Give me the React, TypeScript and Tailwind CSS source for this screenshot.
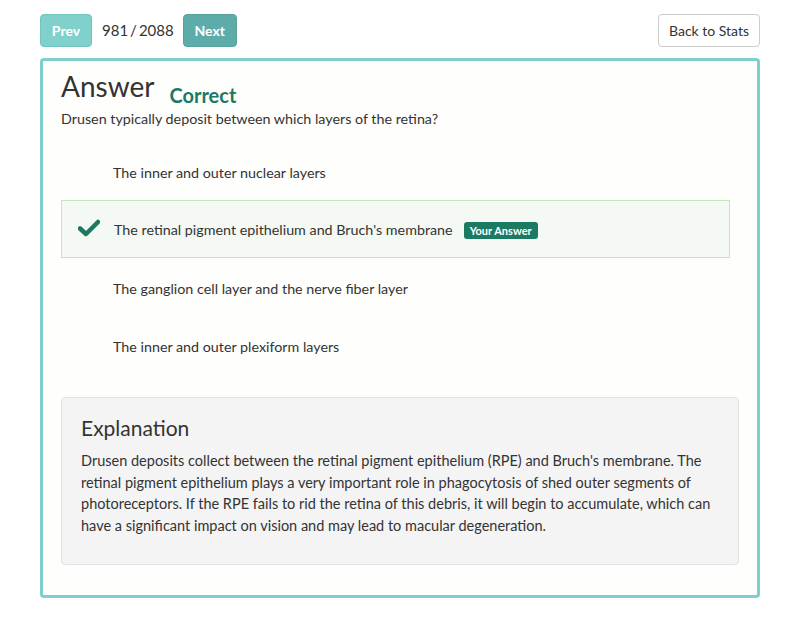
import React from "react";

const options = [
  "The inner and outer nuclear layers",
  "The retinal pigment epithelium and Bruch's membrane",
  "The ganglion cell layer and the nerve fiber layer",
  "The inner and outer plexiform layers",
];

export default function App() {
  return (
    <div className="w-[800px] h-[622px] bg-white text-[#333] px-[40px] pt-[14px]" style={{ fontFamily: "Lato, 'Noto Sans', sans-serif" }}>
      <div className="flex items-center justify-between h-[33px]">
        <div className="flex items-center">
          <button className="h-[33px] w-[52px] rounded-[4px] bg-[#80d0cc] border border-[#74c4c0] text-white font-bold text-[14px]">Prev</button>
          <span className="ml-[10px] mr-[9px] text-[15px] text-[#333]">981<span className="mx-[2px]">/</span>2088</span>
          <button className="h-[33px] w-[54px] rounded-[4px] bg-[#5eaca9] border border-[#55a29f] text-white font-bold text-[14px]">Next</button>
        </div>
        <button className="h-[33px] w-[102px] rounded-[4px] bg-white border border-[#cccccc] text-[14px] text-[#333]">Back to Stats</button>
      </div>
      <div className="mt-[11px] h-[540px] border-[3px] border-[#7dcfcb] rounded-[4px] bg-[#fefefc] px-[18px] pt-[7px]">
        <div className="flex items-end">
          <h1 className="text-[28px] leading-[36px] text-[#333]">Answer</h1>
          <span className="ml-[15px] text-[20px] leading-[26px] font-bold text-[#1a7a62] mb-[-4px]">Correct</span>
        </div>
        <p className="text-[14.3px] leading-[20px] mt-[5px] text-[#333]">Drusen typically deposit between which layers of the retina?</p>
        <div className="mt-[15px] mr-[9px]">
          {options.map((o, i) =>
            i === 1 ? (
              <div key={i} className="h-[58px] flex items-center bg-[#f4f9f3] border border-[#c6e6c0] mt-[-2px] mb-[2px] pt-[2px]">
                <svg width="22" height="18" viewBox="0 0 22 18" className="ml-[16px] mr-[14px] mt-[-4px]">
                  <path d="M2 9.5 L8 15 L20 3" stroke="#1a7a62" strokeWidth="4.5" fill="none" strokeLinecap="round" strokeLinejoin="round" />
                </svg>
                <span className="text-[14.3px] text-[#333]">{o}</span>
                <span className="ml-[11px] px-[6px] h-[17px] leading-[17px] rounded-[3px] bg-[#1a7a62] text-white text-[11px] font-bold">Your Answer</span>
              </div>
            ) : (
              <div key={i} className="h-[58px] flex items-center pl-[52px] text-[14.3px] text-[#333]">{o}</div>
            )
          )}
        </div>
        <div className="mt-[21px] h-[168px] bg-[#f4f4f4] border border-[#e3e3e3] rounded-[4px] px-[19px] pt-[16px]">
          <h2 className="text-[21px] leading-[28px] text-[#333]">Explanation</h2>
          <p className="mt-[8px] text-[14.5px] leading-[21.7px] text-[#333]">
            Drusen deposits collect between the retinal pigment epithelium (RPE) and Bruch's membrane. The retinal pigment epithelium plays a very important role in phagocytosis of shed outer segments of photoreceptors. If the RPE fails to rid the retina of this debris, it will begin to accumulate, which can have a significant impact on vision and may lead to macular degeneration.
          </p>
        </div>
      </div>
    </div>
  );
}
